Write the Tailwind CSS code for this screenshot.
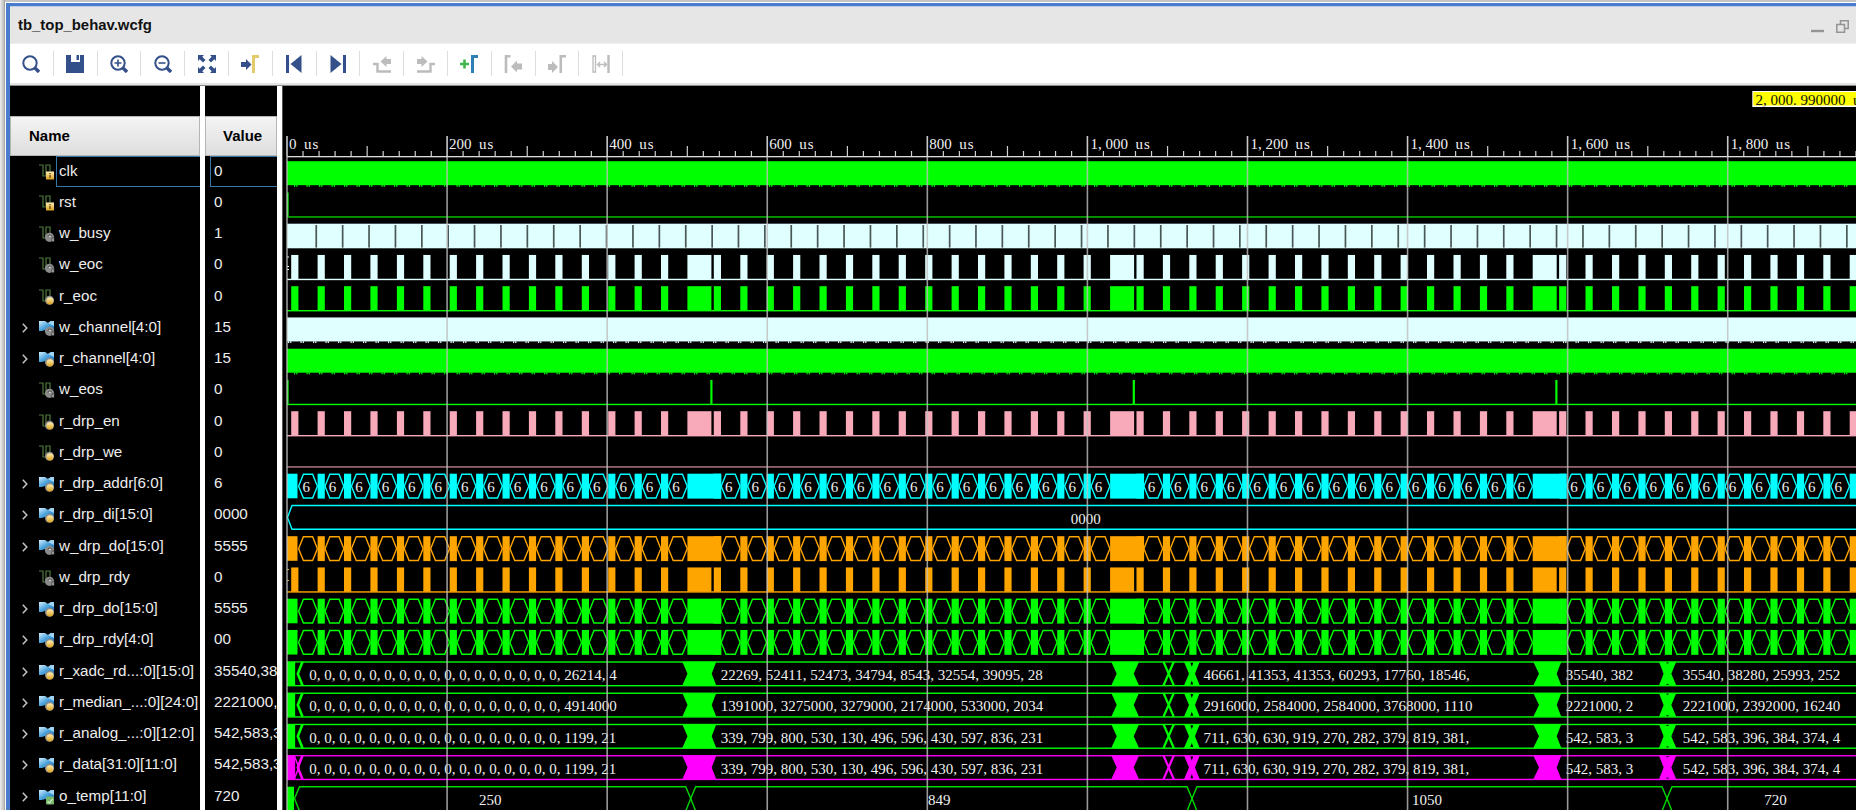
<!DOCTYPE html>
<html lang="en">
<head>
<meta charset="utf-8">
<title>tb_top_behav.wcfg</title>
<script src="https://cdn.jsdelivr.net/npm/@tailwindcss/browser@4"></script>
</head>
<body class="h-[810px] w-[1856px] overflow-hidden bg-white font-['Liberation_Sans',Arial,sans-serif] text-[15.2px] text-black">
<svg class="absolute h-0 w-0">
  <defs>
    <linearGradient id="blue" x1="0" y1="0" x2="1" y2="1"><stop offset="0" stop-color="#d5efff"/><stop offset=".5" stop-color="#4ba3dc"/><stop offset="1" stop-color="#1c6fb5"/></linearGradient>
    <linearGradient id="gold" x1="0" y1="0" x2="0" y2="1"><stop offset="0" stop-color="#fff0b8"/><stop offset="1" stop-color="#dba11f"/></linearGradient>
    <symbol id="wire" viewBox="0 0 16 16"><path d="M0 1h4v11h3V1h4v8" fill="none" stroke="#4d7a3c" stroke-width="1.2"/></symbol>
    <symbol id="bus" viewBox="0 0 16 16"><path d="M0 1h6l3 2 3-2h3v10H9L6 10l-3 1H0z" fill="url(#blue)"/><path d="M9 3l3-2h3v5z" fill="#9fd4f5"/></symbol>
    <symbol id="b-square" viewBox="0 0 16 16"><rect x="7" y="7.500" width="8" height="8" fill="url(#gold)"/><path d="M11 9v1.200M11 11v3" stroke="#6d4c00" stroke-width="1.400"/></symbol>
    <symbol id="b-gold" viewBox="0 0 16 16"><circle cx="10.500" cy="11.300" r="4.500" fill="#8b8b8b"/><circle cx="11" cy="11.800" r="3.600" fill="url(#gold)"/></symbol>
    <symbol id="b-gray" viewBox="0 0 16 16"><circle cx="10.500" cy="11.300" r="4.600" fill="#8b8b8b"/><path d="M13 15.500V12h2v3.500zM9 11a2 2 0 0 1 4 0" fill="#d0d0d0" stroke="#3b3b3b" stroke-width=".8"/></symbol>
    <symbol id="b-green" viewBox="0 0 16 16"><rect x="7" y="7.500" width="8" height="8" rx="1" fill="#77b86b"/><path d="M8.500 12.500l2 1.500 3-4" fill="none" stroke="#d8f0d0" stroke-width="1.200"/></symbol>
  </defs>
</svg>
<div class="flex h-full w-full">
  <div class="w-[5px] shrink-0 border-r border-[#a8a8a8] bg-gradient-to-r from-[#ececec] to-[#bdbdbd]"></div>
  <div class="flex h-full min-w-0 flex-1 flex-col border-t-2 border-[#c4c4c4] bg-white pl-px pt-px">
    <div class="flex min-h-0 flex-1 flex-col border-l-[4px] border-t-[3px] border-[#4a7bcd]">
      <header class="flex h-[38px] shrink-0 items-center justify-between border-b border-t border-b-[#f0f0f0] border-t-[#bccbe8] bg-[#e6e6e6] pl-[8px] pr-[7px]">
        <h1 class="text-[14.9px] font-bold text-[#111]">tb_top_behav.wcfg</h1>
        <div class="flex gap-[12px] pt-[3px]">
          <svg width="13" height="13" viewBox="0 0 13 13"><path d="M0 11h13" stroke="#949494" stroke-width="2.400"/></svg>
          <svg width="13" height="13" viewBox="0 0 13 13" fill="none" stroke="#949494" stroke-width="1.500"><path d="M4.500 4V.8h7.700v7.700H9"/><path d="M.8 4.500h7.700v7.700H.8z"/></svg>
        </div>
      </header>
      <nav id="tools" class="flex h-[39px] shrink-0 items-center bg-white"></nav>
      <div class="h-[3px] shrink-0 border-b border-[#8a8a8a] bg-[#e4e4e4]"></div>
      <main class="flex min-h-0 flex-1 bg-white">
        <section class="flex w-[190px] shrink-0 flex-col overflow-hidden bg-black">
          <div class="h-[30px] shrink-0"></div>
          <div class="flex h-[40px] shrink-0 items-center border border-[#b5b5b5] bg-gradient-to-b from-[#f4f4f4] to-[#dededf] pl-[18px] pt-px text-[15px] font-bold">Name</div>
          <div id="names" class="flex flex-col text-[#ededed]"></div>
        </section>
        <div class="w-[5px] shrink-0 bg-white"></div>
        <section class="flex w-[72px] shrink-0 flex-col overflow-hidden bg-black">
          <div class="h-[30px] shrink-0"></div>
          <div class="flex h-[40px] shrink-0 items-center border border-[#b5b5b5] bg-gradient-to-b from-[#f4f4f4] to-[#dededf] pl-[17px] pt-px text-[15px] font-bold">Value</div>
          <div id="values" class="flex flex-col text-[#ededed]"></div>
        </section>
        <div class="w-[5px] shrink-0 bg-white"></div>
        <section class="min-w-0 flex-1 overflow-hidden bg-black">
          <svg id="wave" class="block" width="1574" height="724" viewBox="282 86 1574 724" font-family="'Liberation Serif',serif" font-size="15"></svg>
        </section>
      </main>
    </div>
  </div>
</div>
<script>
const N = '#34508a', G = '#bcbcbc';
const icons = [
  `<circle cx="8" cy="8" r="6.700" fill="none" stroke="${N}" stroke-width="2"/><path d="M13 13l4 4" stroke="${N}" stroke-width="3.400"/>`,
  `<path d="M0 0h5v7h9V0h4v18H0z" fill="${N}"/><path d="M10.500 0h2.500v5h-2.500z" fill="${N}"/>`,
  `<circle cx="8" cy="8" r="6.700" fill="none" stroke="${N}" stroke-width="2"/><path d="M13 13l4 4" stroke="${N}" stroke-width="3.400"/><path d="M4.500 8h7M8 4.500v7" stroke="${N}" stroke-width="1.600"/>`,
  `<circle cx="8" cy="8" r="6.700" fill="none" stroke="${N}" stroke-width="2"/><path d="M13 13l4 4" stroke="${N}" stroke-width="3.400"/><path d="M4.500 8h7" stroke="${N}" stroke-width="1.600"/>`,
  `<path d="M0 0h6L4.300 1.700 7.500 5 5 7.500 1.700 4.300 0 6zM18 0h-6l1.700 1.700L10.500 5 13 7.500l3.300-3.200L18 6zM0 18h6l-1.700-1.700L7.500 13 5 10.500l-3.300 3.200L0 12zM18 18h-6l1.700-1.700L10.500 13l2.500-2.500 3.300 3.200L18 12z" fill="${N}"/>`,
  `<path d="M0 7h5V4l5.500 5.500L5 15v-3H0z" fill="${N}"/><path d="M12.500 18V1.500H18" fill="none" stroke="#e3cb6b" stroke-width="3"/>`,
  `<path d="M1 0h3v18H1zM16.500 0v18L5.500 9z" fill="${N}"/>`,
  `<path d="M14 0h3v18h-3zM1.500 0v18l11-9z" fill="${N}"/>`,
  `<path d="M0 9h4.500v7.500H18" fill="none" stroke="${G}" stroke-width="2.400"/><path d="M18 4h-4.500V1L7.500 6.500l6 5.500V9H18z" fill="${G}"/>`,
  `<path d="M18 9h-4.500v7.500H0" fill="none" stroke="${G}" stroke-width="2.400"/><path d="M0 4h4.500V1l6 5.500-6 5.500V9H0z" fill="${G}"/>`,
  `<path d="M0 9h9M4.500 4.500v9" stroke="#3fb54a" stroke-width="2.600"/><path d="M12.500 18V1.500H18" fill="none" stroke="#2f7fb5" stroke-width="3"/>`,
  `<path d="M2 18V1.200H6.500" fill="none" stroke="${G}" stroke-width="2.600"/><path d="M18 8.500h-5V5.500l-6 6 6 6v-3h5z" fill="${G}"/>`,
  `<path d="M0 9h4V6l6 6-6 6v-3H0z" fill="${G}"/><path d="M12.800 18V1.200H18" fill="none" stroke="${G}" stroke-width="2.600"/>`,
  `<path d="M1 1h2.500v16H1z" fill="none" stroke="${G}" stroke-width="1.300"/><path d="M16.500 0v18" stroke="${G}" stroke-width="2.400"/><path d="M5.500 9.500h9M8 7l-2.500 2.500L8 12M12 7l2.500 2.500L12 12" fill="none" stroke="${G}" stroke-width="1.400"/>`
];
document.getElementById('tools').innerHTML = icons.map(i =>
  `<div class="flex h-[25px] w-[43.8px] shrink-0 items-center justify-center border-r-[1.5px] border-[#dedede]"><svg width="18" height="18" viewBox="0 0 18 18">${i}</svg></div>`).join('');

const rows = [
  ['clk','0','square'],['rst','0','square'],['w_busy','1','gray'],['w_eoc','0','gray'],['r_eoc','0','gold'],
  ['w_channel[4:0]','15','gray'],['r_channel[4:0]','15','gold'],['w_eos','0','gray'],['r_drp_en','0','gold'],['r_drp_we','0','gold'],
  ['r_drp_addr[6:0]','6','gold'],['r_drp_di[15:0]','0000','gold'],['w_drp_do[15:0]','5555','gray'],['w_drp_rdy','0','gray'],
  ['r_drp_do[15:0]','5555','gold'],['r_drp_rdy[4:0]','00','gold'],['r_xadc_rd...:0][15:0]','35540,38','gold'],
  ['r_median_...:0][24:0]','2221000,','gold'],['r_analog_...:0][12:0]','542,583,3','gold'],['r_data[31:0][11:0]','542,583,3','gold'],['o_temp[11:0]','720','green']
];
document.getElementById('names').innerHTML = rows.map(([n,,b], i) => {
  const bus = n.includes('[');
  const sel = i === 0 ? 'border border-r-0 border-[#3878a8]' : 'border border-r-0 border-transparent';
  return `<div class="flex h-[31.25px] shrink-0 items-center">
    <svg class="ml-[12px] shrink-0" width="6" height="10" viewBox="0 0 6 10">${bus ? '<path d="M.8.8L4.800 5 .8 9.200" fill="none" stroke="#c4c4c4" stroke-width="1.500"/>' : ''}</svg>
    <svg class="ml-[11px] shrink-0" width="16" height="16"><use href="#${bus ? 'bus' : 'wire'}"/><use href="#b-${b}"/></svg>
    <div class="ml-[1px] flex h-full flex-1 items-center whitespace-nowrap pl-[2px] ${sel}"><span class="-mt-[1px]">${n}</span></div></div>`;
}).join('');
document.getElementById('values').innerHTML = rows.map(([,v], i) =>
  `<div class="ml-[5px] flex h-[31.25px] shrink-0 items-center whitespace-nowrap pl-[3px] ${i === 0 ? 'border border-r-0 border-[#3878a8]' : 'border border-r-0 border-transparent'}"><span class="-mt-[1px]">${v}</span></div>`).join('');

const GR = '#00ff00', CY = '#00ffff', OR = '#ffa500', PK = '#f8aabb', WH = '#e0ffff', MG = '#ff00ff';
const L = 287, R = 1860, P = 26.415, P0 = 291.2;
let s = '';
const top_ = k => 161.2 + 31.25 * k, bot = k => 185.5 + 31.25 * k;
const rect = (x, y, w, h, c) => s += `<rect x="${x}" y="${y}" width="${w}" height="${h}" fill="${c}"/>`;
const path = (d, c, w = 1.4) => s += `<path d="${d}" fill="none" stroke="${c}" stroke-width="${w}"/>`;
const fill = (d, c) => s += `<path d="${d}" fill="${c}"/>`;
const text = (x, y, t, c = '#f0f0f0') => s += `<text x="${x}" y="${y}" fill="${c}">${t}</text>`;
const US = '\u00a0\u00a0<tspan letter-spacing="1">us</tspan>';

function solid(k, c, x0) {
  rect(L, top_(k), R - L, 24, c);
  for (let x = x0; x < R; x += 12.5) { rect(x, bot(k) - .5, 1.2, 1.8, c); rect(x + 2.2, bot(k) - .5, 1.2, 1.8, c); }
}
function low(k, c) { rect(L, bot(k) - .5, R - L, 1.4, c); }
function pulses(k, c) {
  low(k, c);
  for (let i = 0; i < 60; i++) rect((P0 + P * i).toFixed(1), top_(k), i % 16 === 15 ? 24 : 7.2, 24.3, c);
}
function hexes(k, c, label) {
  const a = top_(k) + .6, b = bot(k), m = (a + b) / 2;
  rect(L, a - .6, 10.5, 24.6, c);
  for (let i = 0; i < 60; i++) {
    const x = P0 + P * i, w = i % 16 === 15 ? 34 : 7.2;
    if (i) rect(x.toFixed(1), a - .6, w, 24.9, c);
    if (i % 16 === 15) continue;
    const l = x + 7.4, r = x + P - .2;
    path(`M${l} ${m}L${l + 4.8} ${a}H${r - 4.8}L${r} ${m}L${r - 4.8} ${b}H${l + 4.8}Z`, c);
    if (label) text((l + r) / 2 - 5.6, b - 5.8, label);
  }
}
solid(0, GR, 294);
low(1, '#00c800'); rect(L, top_(1), 1.6, 24, GR);
rect(L, top_(2), R - L, 24.6, WH);
for (let i = 0; i < 59; i++) rect((315.4 + 26.39 * i).toFixed(1), top_(2) + 1.3, 1.7, 22.6, '#4b5757');
pulses(3, WH); rect(L, 256.5, 2, 1, WH); rect(L, 266, 2, 1, WH); rect(L, 269, 2, 1, WH);
pulses(4, GR);
solid(5, WH, 288);
solid(6, GR, 294);
low(7, GR); rect(L, top_(7), 1.6, 24, GR);
[711.3, 1133.7, 1556.3].forEach(x => rect(x - 1, top_(7), 2.2, 24, GR));
pulses(8, PK);
low(9, '#b87f8b');
hexes(10, CY, '6');
{ const a = top_(11) + .6, b = bot(11); path(`M${R} ${a}H292L287.500 ${(a + b) / 2}L292 ${b}H${R}`, CY); text(1070.7, 523.5, '0000'); }
hexes(12, OR);
pulses(13, OR); rect(L, 569, 2, 1, OR); rect(L, 580, 2, 1, OR);
hexes(14, GR); hexes(15, GR);

const xs = [309.2, 720.7, 1203.5, 1565.7, 1682.8];
const z = '0, '.repeat(17);
const data = [
  [z + '26214, 4', '22269, 52411, 52473, 34794, 8543, 32554, 39095, 28', '46661, 41353, 41353, 60293, 17760, 18546,', '35540, 382', '35540, 38280, 25993, 252'],
  [z + '4914000', '1391000, 3275000, 3279000, 2174000, 533000, 2034', '2916000, 2584000, 2584000, 3768000, 1110', '2221000, 2', '2221000, 2392000, 16240'],
  [z + '1199, 21', '339, 799, 800, 530, 130, 496, 596, 430, 597, 836, 231', '711, 630, 630, 919, 270, 282, 379, 819, 381,', '542, 583, 3', '542, 583, 396, 384, 374, 4'],
];
data.push(data[2]);
data.forEach((d, j) => {
  const k = 16 + j, c = j === 3 ? MG : GR, a = top_(k) + .6, b = bot(k), m = (a + b) / 2;
  rect(L, a - .5, R - L, 1.4, c); rect(L, b - .5, R - L, 1.4, c);
  rect(L, a, 8.3, b - a, c);
  rect(295.5, a + 1, 6, b - a - 2, '#000');
  path(`M302.500 ${a}L297.800 ${m}L302.500 ${b}`, c, 2.6);
  if (j === 3) path(`M294 ${a}L299 ${m}L294 ${b}`, c, 1.5);
  [[682.3, 716.3, 687.5, 711.7], [1111.3, 1139, 1116.7, 1133.7], [1184, 1199.7, 1189, 1195], [1533.3, 1561.3, 1539, 1556.7], [1659, 1676.3, 1663.6, 1671.3]]
    .forEach(([x1, x2, w1, w2]) => fill(`M${x1} ${a}H${x2}L${w2} ${m}L${x2} ${b}H${x1}L${w1} ${m}Z`, c));
  rect(1164, a + 1, 9, b - a - 2, '#000');
  path(`M1163.500 ${a}L1173.800 ${b}M1173.800 ${a}L1163.500 ${b}`, c, 2.2);
  fill(`M1190.300 ${a + 1}h3l-1.500 4zM1190.300 ${b - 1}h3l-1.500 -4z`, '#000');
  rect(1666.5, a + .6, 2, 1, '#000'); rect(1666.5, b - 1.6, 2, 1, '#000');
  d.forEach((t, i) => text(xs[i], top_(k) + 18.8, t));
});
{ const a = top_(20) + .5, b = bot(20), m = (a + b) / 2;
  rect(L, a, 7, 26, GR);
  const e = [690.7, 1192, 1667];
  let l = 294.5;
  [...e, R + 20].forEach(x => { path(`M${l} ${m}L${l + 5} ${a}H${x - 5}L${x} ${m}L${x - 5} ${b + .6}H${l + 5}Z`, '#00d800'); l = x; });
  text(479, 804.8, '250'); text(928, 804.8, '849'); text(1412, 804.8, '1050'); text(1764.2, 804.8, '720'); }

rect(282, 86, 1, 724, '#555');
rect(L - .5, 156, R - L, 1.3, '#dcdcdc');
for (let i = 0; i < 10; i++) {
  const x = L + 160.08 * i;
  rect(x - .8, 136, 1.6, 20, '#c8c8c8');
  rect(x - .8, 157, 1.6, 653, 'rgba(190,190,190,.8)');
  for (let j = 1; j < 10; j++) { const h = j === 5 ? 10 : 5; rect(x - .6 + 16.03 * j, 156 - h, 1.2, h, '#d0d0d0'); }
  text(x + (i < 5 ? 2 : 3), 149, (i ? (i < 5 ? i * 200 : '1, ' + ((i - 5) * 200 || '000')) : '0') + US);
}
rect(1752.3, 91, 110, 16, '#ffffff'); rect(1753.3, 92, 110, 13.5, '#ffff00');
text(1755.5, 105, '2, 000. 990000' + US, '#111');
document.getElementById('wave').innerHTML = s;
</script>
</body>
</html>
